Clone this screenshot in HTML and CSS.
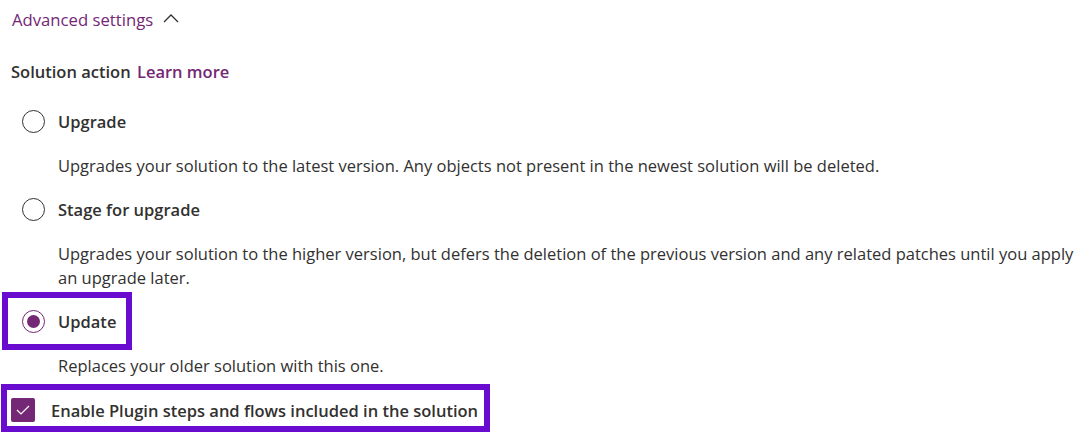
FILE: index.html
```html
<!DOCTYPE html>
<html>
<head>
<meta charset="utf-8">
<link rel="stylesheet" href="styles.css">
</head>
<body>
<div class="panel">
  <div class="adv">
    <span class="adv-label">Advanced settings</span>
    <svg class="chev" width="16" height="10" viewBox="0 0 16 10"><path d="M1 9 L8 2 L15 9" fill="none" stroke="#323130" stroke-width="1.3"/></svg>
  </div>
  <div class="title">Solution action <a class="link">Learn more</a></div>

  <div class="radio-row"><span class="radio"></span><span class="radio-label">Upgrade</span></div>
  <p class="desc">Upgrades your solution to the latest version. Any objects not present in the newest solution will be deleted.</p>

  <div class="radio-row"><span class="radio"></span><span class="radio-label">Stage for upgrade</span></div>
  <p class="desc">Upgrades your solution to the higher version, but defers the deletion of the previous version and any related patches until you apply an upgrade later.</p>

  <div class="radio-row highlight"><span class="radio checked"></span><span class="radio-label">Update</span></div>
  <p class="desc">Replaces your older solution with this one.</p>

  <div class="check-row highlight">
    <span class="checkbox"><svg width="14" height="10" viewBox="0 0 14 10"><path d="M1 5 L5 9 L13 1" fill="none" stroke="#fff" stroke-width="1.2"/></svg></span>
    <span class="check-label">Enable Plugin steps and flows included in the solution</span>
  </div>
</div>
</body>
</html>
```

FILE: styles.css
```css
* { box-sizing: border-box; }
html, body { margin: 0; padding: 0; background: #fff; }
body {
  font-family: "Open Sans", "Noto Sans", sans-serif;
  font-size: 16.5px;
  color: #323130;
  width: 1085px;
  height: 438px;
  overflow: hidden;
}
.panel {
  padding: 8px 0 0 12px;
  display: flex;
  flex-direction: column;
  align-items: flex-start;
}
.adv {
  display: flex;
  align-items: center;
  height: 24px;
  line-height: 24px;
}
.adv-label {
  color: #742774;
  font-size: 16.7px;
}
.chev { margin-left: 10px; margin-top: -4px; }
.title {
  margin-top: 28px;
  line-height: 24px;
  font-weight: 600;
  margin-left: -1px;
}
.link { color: #742774; margin-left: 2px; }
.radio-row {
  display: flex;
  align-items: center;
  height: 46px;
  margin-left: -4px;
  padding: 7px 10px 7px 14px;
  margin-top: 14px;
}
.radio {
  width: 23px;
  height: 23px;
  border-radius: 50%;
  border: 1px solid #323130;
  display: flex;
  align-items: center;
  justify-content: center;
  flex: none;
}
.radio.checked { border-color: #742774; }
.radio.checked::after {
  content: "";
  width: 13px;
  height: 13px;
  border-radius: 50%;
  background: #742774;
}
.radio-label {
  margin-left: 13px;
  font-weight: 600;
}
.desc {
  margin: 10px 0 0 46px;
  line-height: 24px;
  width: 1025px;
}
.radio-row + .desc + .radio-row { margin-top: 8px; }
.highlight {
  outline: 6px solid #6a0ccf;
}
.check-row {
  display: flex;
  align-items: center;
  margin-left: -5px;
  margin-top: 12px;
  padding: 4px 6px 0 4px;
  height: 36px;
}
.checkbox {
  width: 24px;
  height: 24px;
  border-radius: 2px;
  background: #742774;
  display: flex;
  align-items: center;
  justify-content: center;
  flex: none;
}
.check-label {
  margin-left: 16px;
  font-weight: 600;
}
```
